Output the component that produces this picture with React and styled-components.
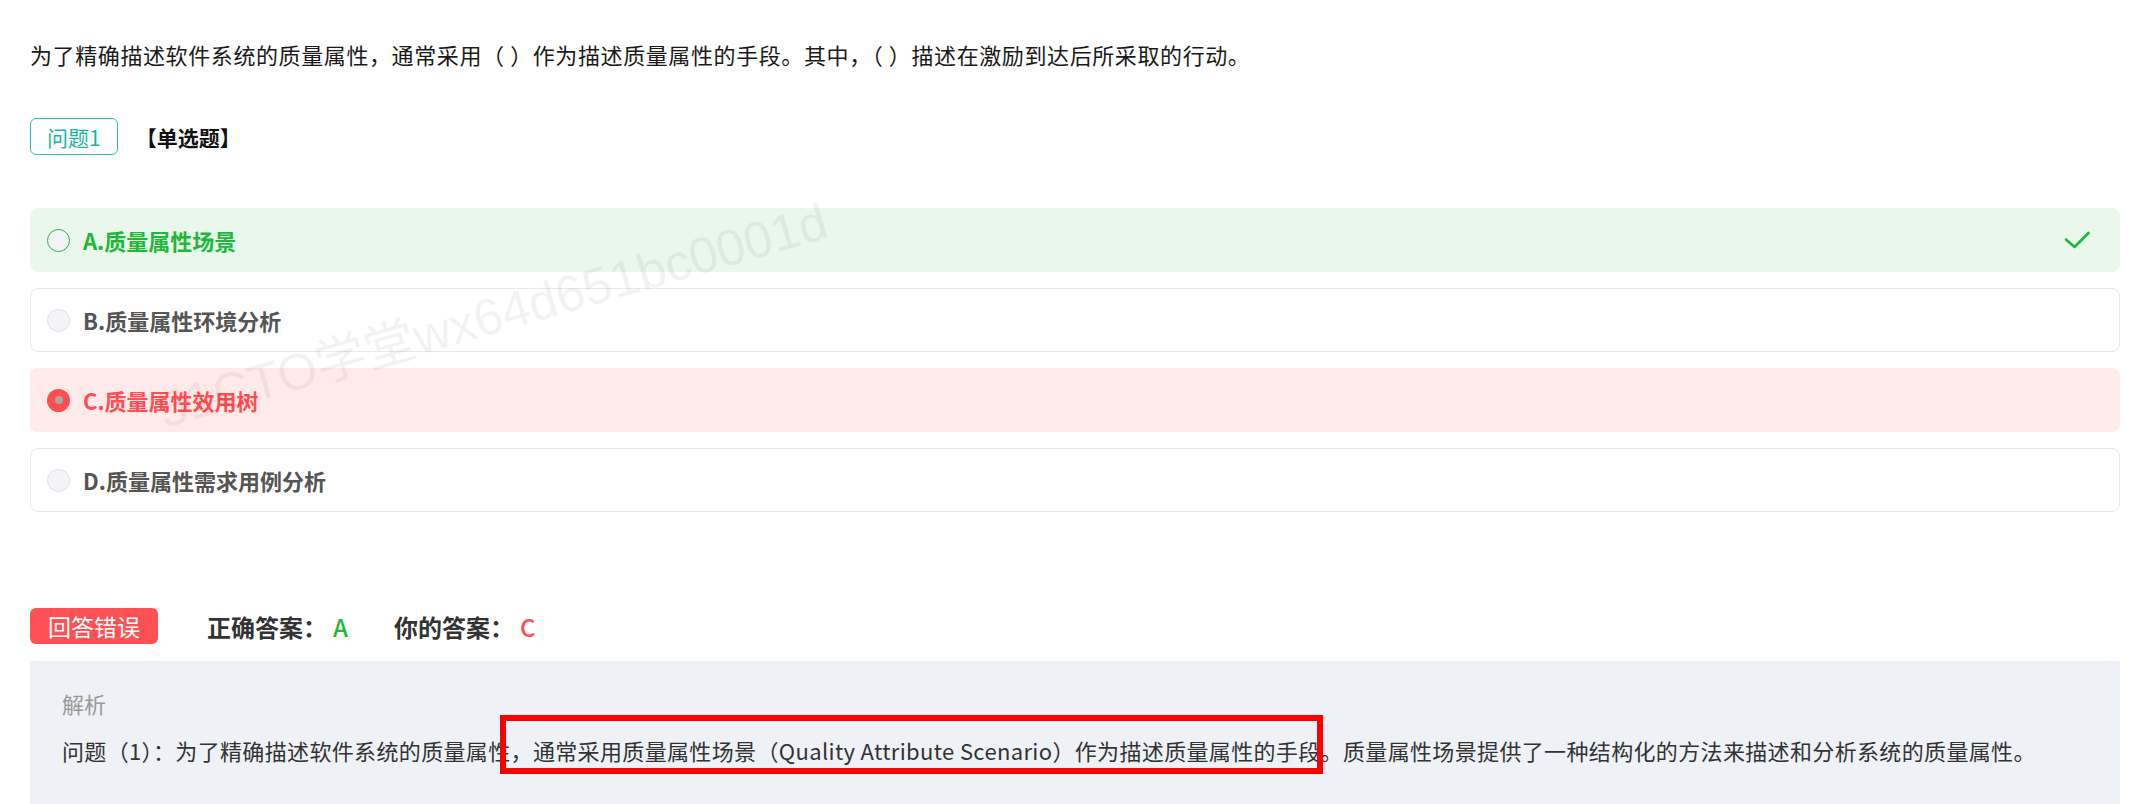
import React from 'react';
import styled, { createGlobalStyle, css } from 'styled-components';

const GlobalStyle = createGlobalStyle`
  html, body {
    margin: 0;
    padding: 0;
    background: #fff;
  }
  body {
    font-family: "Noto Sans CJK SC", "Noto Sans", sans-serif;
    color: #333;
  }
`;

const GREEN = '#1fb83a';
const RED = '#ff4d52';

const options = [
  { key: 'A', text: '质量属性场景', state: 'right' },
  { key: 'B', text: '质量属性环境分析', state: 'idle' },
  { key: 'C', text: '质量属性效用树', state: 'wrong' },
  { key: 'D', text: '质量属性需求用例分析', state: 'idle' },
];

const Page = styled.div`
  position: relative;
  padding: 38px 12px 0 30px;
  overflow: hidden;
  height: 804px;
  box-sizing: border-box;
`;

const Stem = styled.p`
  margin: 0;
  font-size: 22px;
  line-height: 32px;
  letter-spacing: 0.6px;
  color: #1a1a1a;
`;

const TypeRow = styled.div`
  display: flex;
  align-items: center;
  gap: 18px;
  margin-top: 48px;
`;

const Tag = styled.span`
  display: inline-flex;
  align-items: center;
  height: 37px;
  box-sizing: border-box;
  padding: 0 16px;
  border: 1px solid #2cc1aa;
  border-radius: 6px;
  font-size: 21px;
  color: #17b8a0;
`;

const TypeLabel = styled.span`
  font-size: 21px;
  font-weight: 700;
  color: #111;
`;

const OptionList = styled.div`
  display: flex;
  flex-direction: column;
  gap: 16px;
  margin-top: 53px;
`;

const optionLook = {
  right: css`
    background: #e9f8ea;
    border-color: #e9f8ea;
    color: ${GREEN};
  `,
  wrong: css`
    background: #ffeaea;
    border-color: #ffeaea;
    color: ${RED};
  `,
  idle: css`
    background: #fff;
    border-color: #e6e7ef;
    color: #555;
  `,
};

const Option = styled.div`
  display: flex;
  align-items: center;
  height: 64px;
  box-sizing: border-box;
  padding: 0 29px 0 16px;
  border: 1px solid;
  border-radius: 8px;
  font-size: 22px;
  font-weight: 700;
  ${(p) => optionLook[p.$state]}
`;

const Radio = styled.span`
  position: relative;
  flex: none;
  width: 23px;
  height: 23px;
  box-sizing: border-box;
  border-radius: 50%;
  margin-right: 13px;
  background: #f3f4f8;
  border: 1px solid #dcdfe7;
  ${(p) =>
    p.$state === 'right' &&
    css`
      border: 1.5px solid ${GREEN};
    `}
  ${(p) =>
    p.$state === 'wrong' &&
    css`
      background: ${RED};
      border: none;
      &::after {
        content: '';
        position: absolute;
        left: 50%;
        top: 50%;
        width: 8px;
        height: 8px;
        margin: -4px 0 0 -4px;
        border-radius: 50%;
        background: #a6a6a6;
      }
    `}
`;

const OptionText = styled.span`
  flex: 1;
`;

const Check = () => (
  <svg width="26" height="18" viewBox="0 0 26 18" fill="none">
    <polyline
      points="2,8.5 10.5,16 24.5,2"
      stroke={GREEN}
      strokeWidth="2.6"
      strokeLinecap="round"
      strokeLinejoin="round"
    />
  </svg>
);

const ResultRow = styled.div`
  display: flex;
  align-items: center;
  margin-top: 96px;
  font-size: 24px;
`;

const Badge = styled.span`
  display: inline-flex;
  align-items: center;
  justify-content: center;
  width: 128px;
  height: 36px;
  border-radius: 6px;
  background: #ff5055;
  color: #fff;
  font-size: 23px;
  margin-right: 49px;
`;

const AnswerItem = styled.span`
  font-weight: 700;
  color: #333;
  margin-right: 46px;
`;

const AnswerValue = styled.span`
  font-weight: 500;
  margin-left: 6px;
  color: ${(p) => p.$color};
`;

const Analysis = styled.div`
  margin-top: 17px;
  min-height: 200px;
  background: #eef1f6;
  padding: 26px 32px;
`;

const AnalysisTitle = styled.div`
  font-size: 22px;
  line-height: 32px;
  color: #999;
`;

const AnalysisText = styled.p`
  margin: 15px 0 0;
  font-size: 22px;
  line-height: 32px;
  letter-spacing: 0.35px;
  color: #333;
`;

const Marked = styled.span`
  position: relative;
  &::after {
    content: '';
    position: absolute;
    left: -11px;
    right: -2px;
    top: -19px;
    bottom: -8px;
    border: 6px solid #f00;
    pointer-events: none;
  }
`;

const Watermark = styled.div`
  position: absolute;
  left: 158px;
  top: 370px;
  transform: rotate(-16deg);
  transform-origin: left center;
  font-family: "Liberation Sans", "Noto Sans CJK SC", sans-serif;
  font-size: 51px;
  color: rgba(0, 0, 0, 0.05);
  white-space: nowrap;
  pointer-events: none;
`;

export default function App() {
  return (
    <Page>
      <GlobalStyle />
      <Stem>
        为了精确描述软件系统的质量属性，通常采用（ ）作为描述质量属性的手段。其中，（ ）描述在激励到达后所采取的行动。
      </Stem>

      <TypeRow>
        <Tag>问题1</Tag>
        <TypeLabel>【单选题】</TypeLabel>
      </TypeRow>

      <OptionList>
        {options.map((o) => (
          <Option key={o.key} $state={o.state}>
            <Radio $state={o.state} />
            <OptionText>
              {o.key}.{o.text}
            </OptionText>
            {o.state === 'right' && <Check />}
          </Option>
        ))}
      </OptionList>

      <ResultRow>
        <Badge>回答错误</Badge>
        <AnswerItem>
          正确答案：<AnswerValue $color={GREEN}>A</AnswerValue>
        </AnswerItem>
        <AnswerItem>
          你的答案：<AnswerValue $color={RED}>C</AnswerValue>
        </AnswerItem>
      </ResultRow>

      <Analysis>
        <AnalysisTitle>解析</AnalysisTitle>
        <AnalysisText>
          问题（1）：为了精确描述软件系统的质量属性
          <Marked>，通常采用质量属性场景（Quality Attribute Scenario）作为描述质量属性的手段</Marked>
          。质量属性场景提供了一种结构化的方法来描述和分析系统的质量属性。
        </AnalysisText>
      </Analysis>

      <Watermark>51CTO学堂wx64d651bc0001d</Watermark>
    </Page>
  );
}
